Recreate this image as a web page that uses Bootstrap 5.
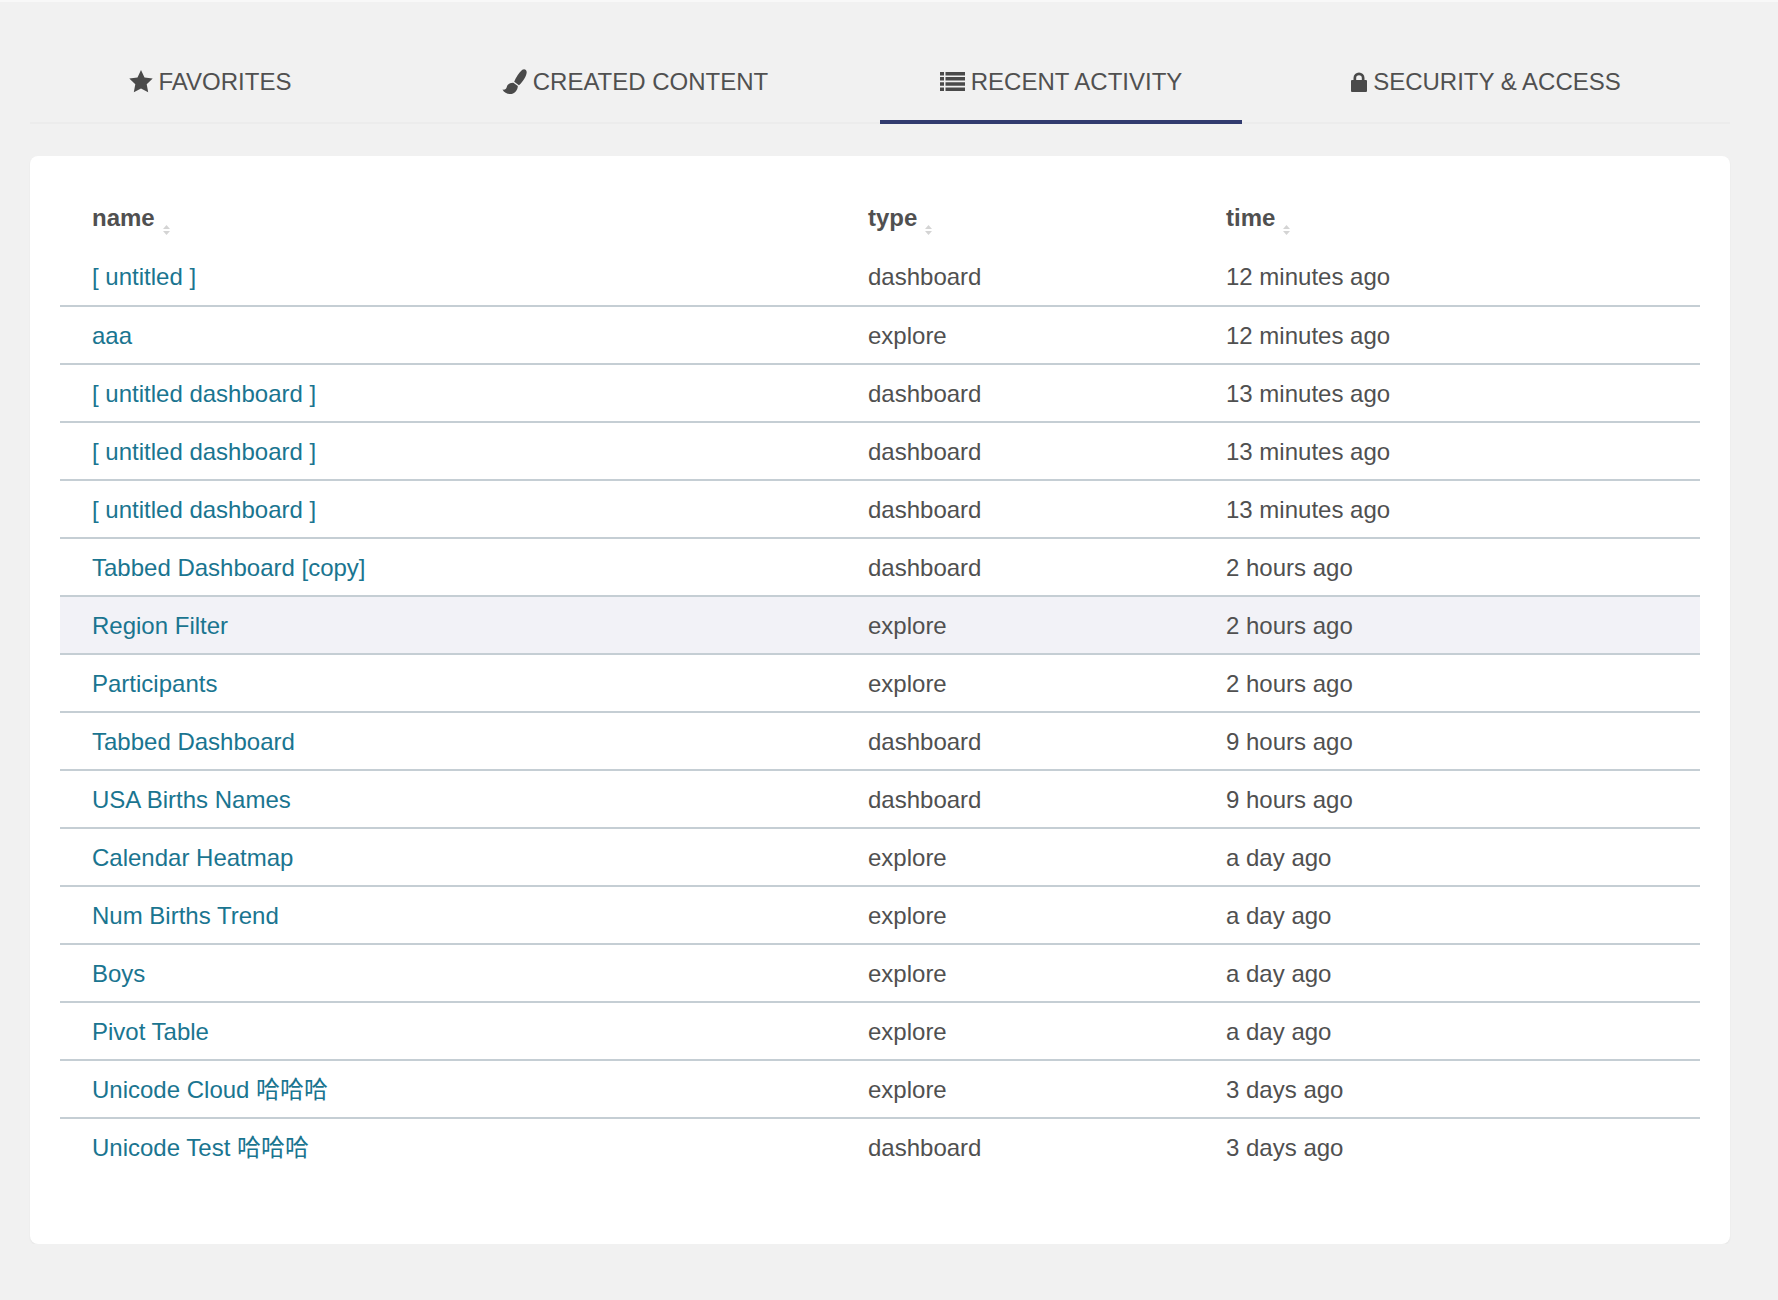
<!DOCTYPE html>
<html lang="en">
<head>
<meta charset="utf-8">
<title>Recent activity</title>
<link href="https://cdn.jsdelivr.net/npm/bootstrap@5.3.0/dist/css/bootstrap.min.css" rel="stylesheet">
<style>
html, body { background: #f1f1f1; }
body { font-family: "Liberation Sans", "Noto Sans CJK SC", sans-serif; color: #505050; font-size: 24px; }
.top-strip { height: 2px; background: #f8f8f8; }
.page-wrap { padding: 0 48px 0 30px; }
.tab-bar { border-bottom: 2px solid #ececec; height: 122px; padding-top: 38px; flex-wrap: nowrap; }
.tab-item { width: 362px; margin-right: 63px; }
.tab-item .nav-link { display: flex; align-items: center; justify-content: center; gap: 6px; height: 84px; margin-bottom: -2px; padding: 3px 0 0; color: #505050; font-size: 24px; line-height: 1; border-bottom: 4px solid transparent; }
.tab-item .nav-link.tab-nudge { padding-right: 2px; }
.tab-item .nav-link.active { border-bottom-color: #323b6f; color: #505050; }
.tab-ico { fill: #4a4a4a; flex: none; }
.sheet { margin-top: 32px; background: #fff; border-radius: 8px; height: 1088px; padding: 32px 30px 0; box-shadow: 0 1px 2px rgba(0,0,0,.06); }
.act-table { width: 100%; margin: 0; border-collapse: collapse; table-layout: fixed; --bs-table-bg: transparent; color: #505050; }
.act-table th { height: 60px; padding: 0 0 1px 32px; border: 0; font-size: 24px; font-weight: 700; vertical-align: middle; color: #505050; }
.act-table td { height: 58px; padding: 2px 0 0 32px; border: 0; border-bottom: 2px solid #c5ced4; vertical-align: middle; font-size: 24px; color: #505050; line-height: 1.2; }
.act-table tr:last-child td { border-bottom: 0; }
.act-table .hl-row td { background: #f2f2f7; }
.act-table a { color: #1a7590; text-decoration: none; }
.col-name { width: 776px; }
.col-type { width: 358px; }
.sort-ico { display: inline-block; margin-left: 8px; vertical-align: -9px; fill: #d4d4d4; }
</style>
</head>
<body>
<div class="top-strip"></div>
<div class="page-wrap">
  <ul class="nav tab-bar">
    <li class="nav-item tab-item"><a class="nav-link tab-nudge" href="#">
      <svg class="tab-ico" width="24" height="23" viewBox="0 0 24 23"><path d="M12 0l3.500 7.400 8.200 1.100-6 5.700 1.500 8.100-7.200-3.900-7.200 3.900 1.500-8.100-6-5.700 8.200-1.100z"/></svg>FAVORITES</a></li>
    <li class="nav-item tab-item"><a class="nav-link tab-nudge" href="#">
      <svg class="tab-ico" width="25" height="25" viewBox="0 0 24 24"><path d="M19.500 .8c1.600-1.300 4.200-.4 4.200 2.200 0 3-3.500 9.500-7.500 12.500l-4.500-3.200C13.300 8.500 16.300 3.400 19.500 .8z"/><path d="M10.900 13.200l4.300 3c-.2 4.400-3.300 7.800-7.500 7.800-3 0-5.900-1.500-7.200-4.300 2.300.5 3.500-.6 4-2.300.7-2.600 3-4.400 6.400-4.200z"/></svg>CREATED CONTENT</a></li>
    <li class="nav-item tab-item"><a class="nav-link active" href="#">
      <svg class="tab-ico" width="25" height="19" viewBox="0 0 25 19"><path d="M0 0h4v3.400H0zM5.500 0H25v3.400H5.500zM0 5.100h4v3.400H0zM5.500 5.100H25v3.400H5.500zM0 10.300h4v3.400H0zM5.500 10.300H25v3.400H5.500zM0 15.500h4V19H0zM5.500 15.500H25V19H5.500z"/></svg>RECENT ACTIVITY</a></li>
    <li class="nav-item tab-item"><a class="nav-link" href="#">
      <svg class="tab-ico" width="16" height="20" viewBox="0 0 16 20"><path d="M2.500 8V6a5.500 5.500 0 0 1 11 0v2H15a1 1 0 0 1 1 1v10a1 1 0 0 1-1 1H1a1 1 0 0 1-1-1V9a1 1 0 0 1 1-1zm2.700 0h5.600V6a2.800 2.800 0 0 0-5.600 0z"/></svg>SECURITY &amp; ACCESS</a></li>
  </ul>
  <div class="sheet">
    <table class="table act-table">
      <colgroup><col class="col-name"><col class="col-type"><col></colgroup>
      <thead>
        <tr>
          <th>name<svg class="sort-ico" width="7" height="10" viewBox="0 0 7 10"><path d="M3.500 0L7 4H0zM0 6h7l-3.500 4z"/></svg></th>
          <th>type<svg class="sort-ico" width="7" height="10" viewBox="0 0 7 10"><path d="M3.500 0L7 4H0zM0 6h7l-3.500 4z"/></svg></th>
          <th>time<svg class="sort-ico" width="7" height="10" viewBox="0 0 7 10"><path d="M3.500 0L7 4H0zM0 6h7l-3.500 4z"/></svg></th>
        </tr>
      </thead>
      <tbody>
        <tr><td><a href="#">[ untitled ]</a></td><td>dashboard</td><td>12 minutes ago</td></tr>
        <tr><td><a href="#">aaa</a></td><td>explore</td><td>12 minutes ago</td></tr>
        <tr><td><a href="#">[ untitled dashboard ]</a></td><td>dashboard</td><td>13 minutes ago</td></tr>
        <tr><td><a href="#">[ untitled dashboard ]</a></td><td>dashboard</td><td>13 minutes ago</td></tr>
        <tr><td><a href="#">[ untitled dashboard ]</a></td><td>dashboard</td><td>13 minutes ago</td></tr>
        <tr><td><a href="#">Tabbed Dashboard [copy]</a></td><td>dashboard</td><td>2 hours ago</td></tr>
        <tr class="hl-row"><td><a href="#">Region Filter</a></td><td>explore</td><td>2 hours ago</td></tr>
        <tr><td><a href="#">Participants</a></td><td>explore</td><td>2 hours ago</td></tr>
        <tr><td><a href="#">Tabbed Dashboard</a></td><td>dashboard</td><td>9 hours ago</td></tr>
        <tr><td><a href="#">USA Births Names</a></td><td>dashboard</td><td>9 hours ago</td></tr>
        <tr><td><a href="#">Calendar Heatmap</a></td><td>explore</td><td>a day ago</td></tr>
        <tr><td><a href="#">Num Births Trend</a></td><td>explore</td><td>a day ago</td></tr>
        <tr><td><a href="#">Boys</a></td><td>explore</td><td>a day ago</td></tr>
        <tr><td><a href="#">Pivot Table</a></td><td>explore</td><td>a day ago</td></tr>
        <tr><td><a href="#">Unicode Cloud 哈哈哈</a></td><td>explore</td><td>3 days ago</td></tr>
        <tr><td><a href="#">Unicode Test 哈哈哈</a></td><td>dashboard</td><td>3 days ago</td></tr>
      </tbody>
    </table>
  </div>
</div>
<script src="https://cdn.jsdelivr.net/npm/bootstrap@5.3.0/dist/js/bootstrap.bundle.min.js"></script>
</body>
</html>
